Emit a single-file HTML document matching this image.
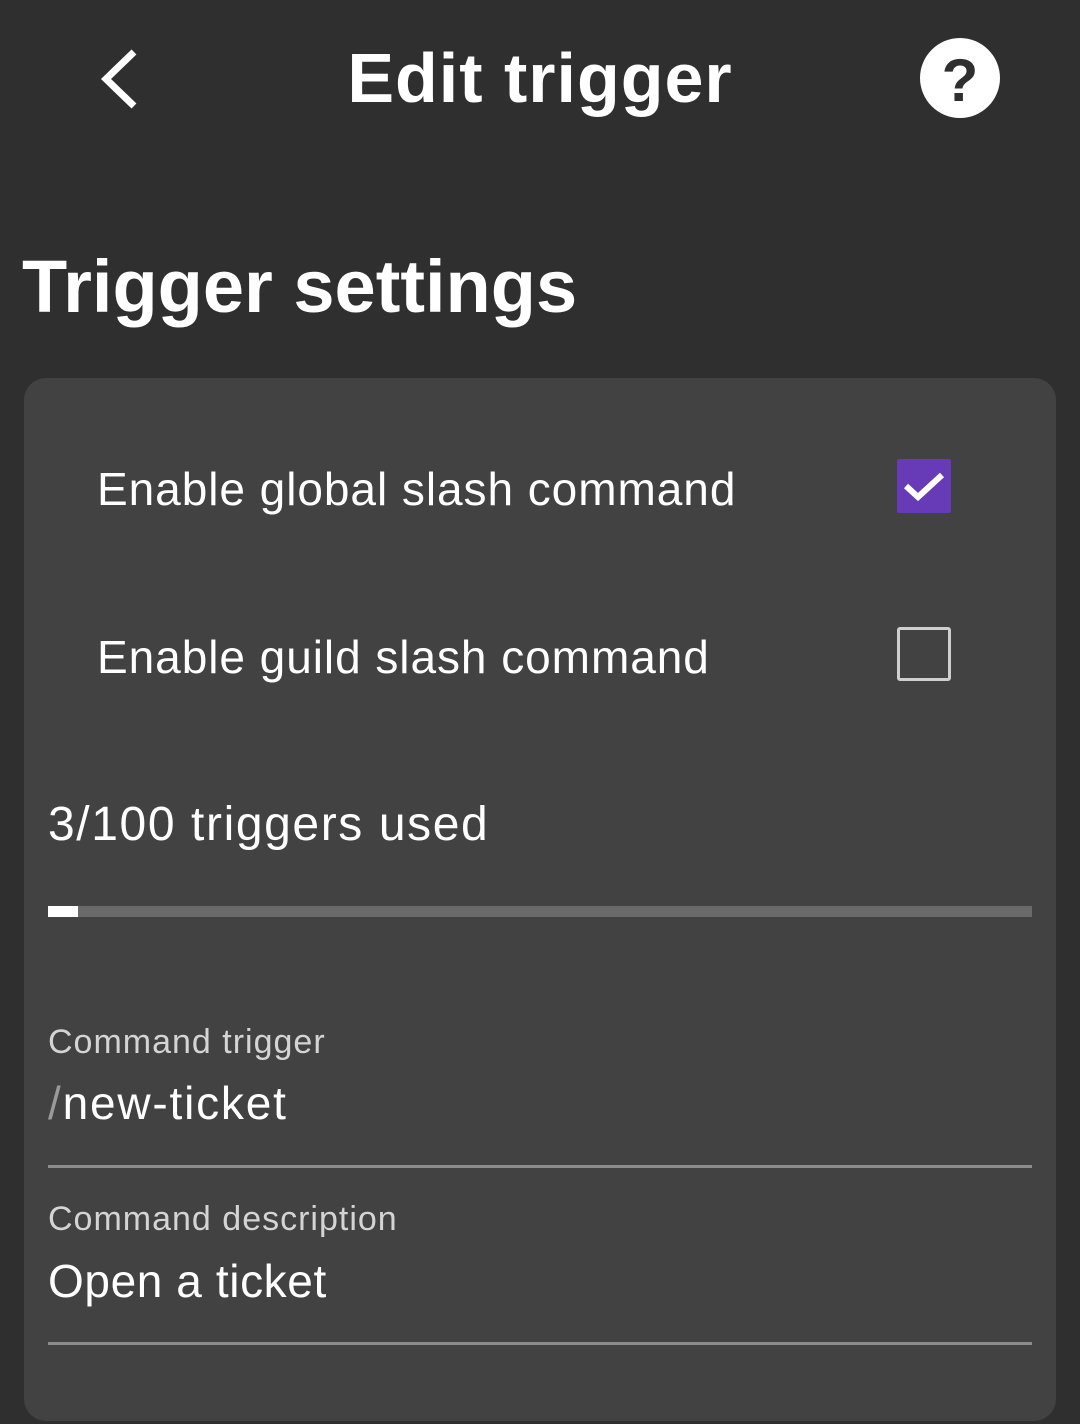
<!DOCTYPE html>
<html><head><style>
body{margin:0;width:1080px;height:1424px;background:#2f2f2f;font-family:"Liberation Sans",sans-serif;color:#fff;position:relative;overflow:hidden}
.a{position:absolute;white-space:nowrap}
.card{position:absolute;left:24px;top:378px;width:1032px;height:1043px;background:#424242;border-radius:22px}
.t{font-size:46px;line-height:1;letter-spacing:0.6px}
.lbl{font-size:34px;color:#d4d4d4;line-height:1;letter-spacing:1px}
.line{position:absolute;left:48px;width:984px;height:3px;background:#8c8c8c}
</style></head><body>
<svg class="a" style="left:98px;top:48px" width="44" height="62" viewBox="0 0 44 62"><path d="M36 4 L8 31 L36 58" stroke="#fff" stroke-width="7" fill="none"/></svg>
<div class="a" style="left:0;width:1080px;text-align:center;top:38px;font-size:70px;font-weight:bold;letter-spacing:1px;line-height:80px">Edit trigger</div>
<svg class="a" style="left:920px;top:38px" width="80" height="80" viewBox="0 0 80 80"><circle cx="40" cy="40" r="40" fill="#fff"/><text x="40" y="63" text-anchor="middle" font-family="Liberation Sans" font-weight="bold" font-size="60" fill="#2f2f2f">?</text></svg>
<div class="a" style="left:22px;top:247px;font-size:74px;font-weight:bold;letter-spacing:0px;line-height:80px">Trigger settings</div>
<div class="card"></div>
<div class="a t" style="left:97px;top:466px;letter-spacing:0.95px">Enable global slash command</div>
<div class="a" style="left:897px;top:459px;width:54px;height:54px;background:#673ab7;border-radius:2px"></div>
<svg class="a" style="left:897px;top:459px" width="54" height="54" viewBox="0 0 54 54"><path d="M9 27 L21 38 L45 16" stroke="#fff" stroke-width="6" fill="none"/></svg>
<div class="t a" style="left:97px;top:634px;letter-spacing:0.95px">Enable guild slash command</div>
<div class="a" style="left:897px;top:627px;width:48px;height:48px;border:3px solid #cfcfcf;border-radius:3px"></div>
<div class="a" style="left:48px;top:801px;font-size:48px;line-height:1;letter-spacing:1.6px">3/100 triggers used</div>
<div class="a" style="left:48px;top:906px;width:984px;height:11px;background:#6a6a6a"></div>
<div class="a" style="left:48px;top:906px;width:30px;height:11px;background:#fff"></div>
<div class="a lbl" style="left:48px;top:1025px">Command trigger</div>
<div class="a t" style="left:48px;top:1080px;letter-spacing:1.8px"><span style="color:#9a9a9a">/</span>new-ticket</div>
<div class="line" style="top:1165px"></div>
<div class="a lbl" style="left:48px;top:1202px">Command description</div>
<div class="a t" style="left:48px;top:1258px">Open a ticket</div>
<div class="line" style="top:1342px"></div>
</body></html>
